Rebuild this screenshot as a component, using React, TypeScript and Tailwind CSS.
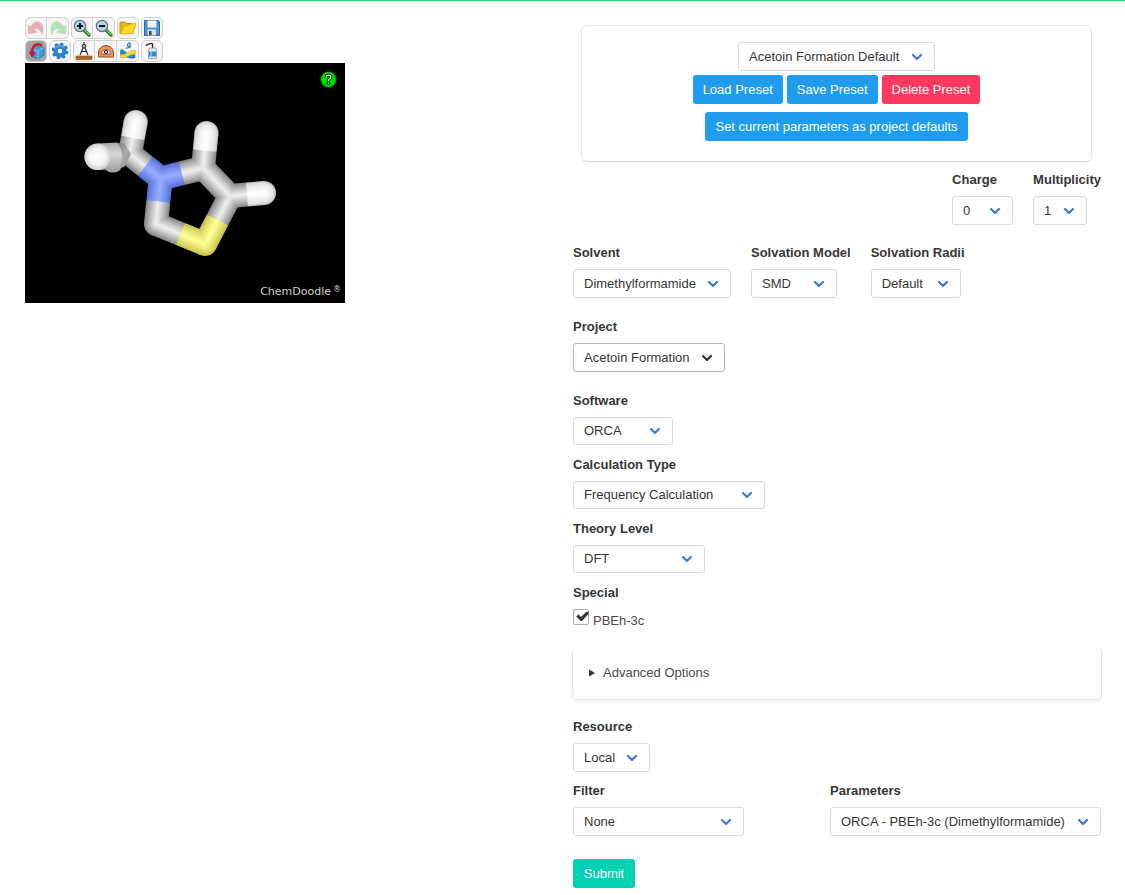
import React from "react";

type Rgb = [number, number, number];
type Atom = { x: number; y: number; el: "C" | "H" | "N" | "S" };

const shades: Record<Atom["el"], [Rgb, Rgb]> = {
  C: [[134, 134, 134], [236, 236, 236]],
  H: [[190, 190, 190], [255, 255, 255]],
  N: [[84, 112, 214], [148, 172, 255]],
  S: [[200, 196, 74], [255, 255, 150]],
};

const atoms: Atom[] = [
  { x: 110.7, y: 59, el: "H" },
  { x: 105, y: 91, el: "C" },
  { x: 135.7, y: 115.5, el: "N" },
  { x: 178, y: 105, el: "C" },
  { x: 181.5, y: 70, el: "H" },
  { x: 205, y: 133, el: "C" },
  { x: 239, y: 130, el: "H" },
  { x: 180, y: 181, el: "S" },
  { x: 131, y: 161, el: "C" },
];

const bonds: [number, number][] = [
  [0, 1],
  [1, 2],
  [2, 3],
  [3, 4],
  [3, 5],
  [5, 6],
  [5, 7],
  [7, 8],
  [8, 2],
];

const LAYERS = 12;
const STICK = 24;

function shade(el: Atom["el"], t: number) {
  const [a, b] = shades[el];
  const k = el === "H" ? Math.pow(t, 0.4) : Math.pow(t, 0.85);
  return `rgb(${a.map((v, i) => Math.round(v + (b[i] - v) * k)).join(",")})`;
}

function Molecule() {
  const layers = Array.from({ length: LAYERS }, (_, i) => i);
  return (
    <svg viewBox="0 0 320 240" className="block h-60 w-80" role="img" aria-label="Molecule">
      <defs>
        <linearGradient id="stub" x1="0" y1="0" x2="0" y2="1">
          <stop offset="0" stopColor="#a4a4a4" />
          <stop offset="0.4" stopColor="#d6d6d6" />
          <stop offset="1" stopColor="#a4a4a4" />
        </linearGradient>
        <linearGradient id="stubDark" x1="0" y1="0" x2="1" y2="1">
          <stop offset="0" stopColor="#7c7c7c" />
          <stop offset="0.5" stopColor="#aaaaaa" />
          <stop offset="1" stopColor="#8c8c8c" />
        </linearGradient>
        <radialGradient id="ball" cx="0.5" cy="0.5" r="0.5">
          <stop offset="0" stopColor="#ffffff" />
          <stop offset="0.6" stopColor="#f4f4f4" />
          <stop offset="1" stopColor="#cfcfcf" />
        </radialGradient>
      </defs>
      <ellipse cx="88" cy="105" rx="8" ry="4.500" fill="#a2a2a2" />
      {layers.map((l) => {
        const w = STICK * (1 - l / LAYERS);
        const t = l / (LAYERS - 1);
        return (
          <g key={l} strokeWidth={w}>
            {bonds.map(([p, q]) => {
              const a = atoms[p];
              const b = atoms[q];
              const mx = (a.x + b.x) / 2;
              const my = (a.y + b.y) / 2;
              return (
                <g key={`${p}-${q}`}>
                  <line x1={a.x} y1={a.y} x2={mx} y2={my} stroke={shade(a.el, t)} />
                  <line x1={mx} y1={my} x2={b.x} y2={b.y} stroke={shade(b.el, t)} />
                </g>
              );
            })}
            {atoms.map((a, i) => (
              <circle key={i} cx={a.x} cy={a.y} r={w / 2} fill={shade(a.el, t)} strokeWidth="0" />
            ))}
          </g>
        );
      })}
      <path d="M92 80 L99 80 L106 91 L99 104 L92 106 Z" fill="url(#stubDark)" />
      <path d="M72 80.500 L92 79.500 Q97 85 97 92 Q97 100 92 106 L72 107 Z" fill="url(#stub)" />
      <circle cx="72.500" cy="93.800" r="13.200" fill="url(#ball)" />
    </svg>
  );
}

function Tool({ label, active, faded, divided, children }: {
  label: string;
  active?: boolean;
  faded?: boolean;
  divided?: boolean;
  children: React.ReactNode;
}) {
  return (
    <button
      type="button"
      aria-label={label}
      className={`flex h-5 items-center justify-center ${active ? "bg-[#a3a3a3]" : ""} ${divided ? "w-[22px] border-l border-[#d3d3d3]" : "w-5"}`}
    >
      <svg viewBox="0 0 20 20" className={`h-5 w-5 shrink-0 ${faded ? "opacity-40" : ""}`} fill="none">
        {children}
      </svg>
    </button>
  );
}

function Group({ children }: { children: React.ReactNode }) {
  return <div className="flex overflow-hidden rounded-[5px] border border-[#d0d0d0] bg-[#f6f6f6]">{children}</div>;
}

function Magnifier({ plus }: { plus?: boolean }) {
  return (
    <>
      <path d="M11.500 11.500 L17 17" stroke="#227a22" strokeWidth="3.400" strokeLinecap="round" />
      <path d="M12.500 12 L17 16.400" stroke="#67d94b" strokeWidth="1.400" strokeLinecap="round" />
      <circle cx="8" cy="8" r="5.600" fill="#a9d6f3" stroke="#6d6d6d" strokeWidth="1.200" />
      <path d="M5 8 H11" stroke="#111" strokeWidth="2" />
      {plus && <path d="M8 5 V11" stroke="#111" strokeWidth="2" />}
    </>
  );
}

function Toolbar() {
  return (
    <div className="flex flex-col gap-px">
      <div className="flex gap-0.5">
        <Group>
          <Tool label="Undo" faded>
            <path d="M2 7 L2 16 L11.500 14.500 L8.500 11.500 C10.500 9.500 14 11 16.500 17 C18.500 9 16 3.500 11.500 3.500 C8.500 3.500 6.500 5.500 5 8.500 Z" fill="#d0484c" stroke="#b08080" strokeWidth="0.600" />
          </Tool>
          <Tool label="Redo" faded divided>
            <path d="M18 7 L18 16 L8.500 14.500 L11.500 11.500 C9.500 9.500 6 11 3.500 17 C1.500 9 4 3.500 8.500 3.500 C11.500 3.500 13.500 5.500 15 8.500 Z" fill="#4fc95a" stroke="#80b080" strokeWidth="0.600" />
          </Tool>
        </Group>
        <Group>
          <Tool label="Zoom in"><Magnifier plus /></Tool>
          <Tool label="Zoom out" divided><Magnifier /></Tool>
        </Group>
        <Group>
          <Tool label="Open">
            <path d="M2 15.500 V5 Q2 4 3 4 H7 L8.500 5.500 H13.500 V7.500 H17" fill="#e9b410" stroke="#c2920d" />
            <path d="M2.500 16 L6 8 Q11 8.500 12 6 L18 5.500 L15 15.500 Z" fill="#ffdc28" stroke="#d4a60b" strokeWidth="0.800" />
          </Tool>
        </Group>
        <Group>
          <Tool label="Save">
            <path d="M2.500 2.500 H16.500 L17.500 3.500 V17.500 H2.500 Z" fill="#4a8ed6" stroke="#2f65ab" />
            <rect x="5.500" y="2.500" width="9" height="7" fill="#f2f2f2" />
            <rect x="5.500" y="11.500" width="8.500" height="6" fill="#dce0e5" />
            <rect x="7" y="13" width="2.500" height="4" fill="#33404e" />
          </Tool>
        </Group>
      </div>
      <div className="flex gap-0.5">
        <Group>
          <Tool label="Rotate" active>
            <path d="M5 7.500 L11 4 L18 6.500 V14 L12 18 L5.500 15.500 Z" fill="#3e9bda" stroke="#1e69a4" strokeWidth="0.700" />
            <path d="M5 7.500 L12 10 L18 6.500 M12 10 V18" stroke="#87caf0" strokeWidth="0.900" />
            <path d="M16 4.500 C10.500 1 6.500 4.500 6 11.500" stroke="#d8141c" strokeWidth="2.400" />
            <path d="M2.500 10.500 L6 16.500 L9.800 11.500 Z" fill="#d8141c" />
          </Tool>
        </Group>
        <Group>
          <Tool label="Settings">
            <circle cx="10" cy="10" r="6.800" stroke="#2379bd" strokeWidth="3" strokeDasharray="3 2.340" />
            <circle cx="10" cy="10" r="4.500" fill="#f7f7f7" stroke="#2b84ca" strokeWidth="4.400" />
            <path d="M5 8 A5.500 5.500 0 0 1 14 6.500" stroke="#5fb2ea" strokeWidth="1.200" />
          </Tool>
        </Group>
        <Group>
          <Tool label="Distance">
            <rect x="2" y="15" width="16" height="3.500" fill="#b66524" stroke="#8e4a18" strokeWidth="0.600" />
            <path d="M10 1 V4 M9 7 L6 14 M11 7 L14 14 M7.500 10.500 H12.500" stroke="#222" strokeWidth="1.100" />
            <circle cx="10" cy="5.300" r="1.900" fill="#aaa" stroke="#222" />
          </Tool>
          <Tool label="Angle" divided>
            <path d="M2.500 16 V12 A7.500 7.500 0 0 1 17.500 12 V16 Z" fill="#e6935b" stroke="#9a4c18" />
            <path d="M5.500 13 A4.500 4.500 0 0 1 14.500 13 Z" fill="#f7eee8" stroke="#7d4320" strokeWidth="0.700" />
            <circle cx="10" cy="11" r="1.700" stroke="#333" />
            <path d="M10 8.500 V13" stroke="#67320f" strokeWidth="0.700" />
          </Tool>
          <Tool label="Torsion" divided>
            <path d="M8 7 C12 8 13.500 1.500 11 2 C9 2.500 9 8 13 5.500" stroke="#2876b7" strokeWidth="1.200" />
            <path d="M2.500 9 C7 7.500 8 15.500 17 13.500 V17 C9 18.500 6 13.500 2.500 14.500 Z" fill="#1c88d5" stroke="#1769a6" strokeWidth="0.500" />
            <path d="M2.500 13.500 C8 14.500 11 8.500 17.500 9.500 V13 C12 12.500 9 18 2.500 17 Z" fill="#fbd63d" stroke="#d6a719" strokeWidth="0.500" />
          </Tool>
        </Group>
        <Group>
          <Tool label="Clear">
            <path d="M4 5 C5.500 2.500 8 2.500 11 2.800 M10.500 2.500 V7" stroke="#222" strokeWidth="1.300" />
            <path d="M6.500 17.500 V9.500 Q6.500 7 8.500 7 H12.500 Q14.500 7 14.500 9.500 V17.500 Z" fill="#e4eef5" stroke="#7d8a94" strokeWidth="0.800" />
            <rect x="7" y="10.500" width="7" height="5" fill="#328dcc" />
            <path d="M9 9 V17" stroke="#b2d8f0" />
          </Tool>
        </Group>
      </div>
    </div>
  );
}

function Viewer() {
  return (
    <div className="pt-4">
      <Toolbar />
      <div className="relative mt-px w-80 bg-black">
        <Molecule />
        <button type="button" aria-label="Help" className="absolute top-2 right-2 h-[17px] w-[17px]">
          <svg viewBox="0 0 17 17" className="h-full w-full">
            <circle cx="8.500" cy="8.500" r="7.700" fill="#00dc00" stroke="#007d00" strokeWidth="0.800" />
            <path d="M6.200 6.200 Q6.200 4.200 8.500 4.200 Q11 4.200 10.700 6.300 Q10.500 7.300 8.600 8.800 V10" fill="none" stroke="#002c00" strokeWidth="3" />
            <circle cx="8.600" cy="12.300" r="1.700" fill="#002c00" />
            <path d="M6.200 6.200 Q6.200 4.200 8.500 4.200 Q11 4.200 10.700 6.300 Q10.500 7.300 8.600 8.800 V10" fill="none" stroke="#d8f0d8" strokeWidth="1.200" />
            <circle cx="8.600" cy="12.300" r="0.800" fill="#d8f0d8" />
          </svg>
        </button>
        <div className="absolute right-1 bottom-[3px] flex items-start gap-0.5 font-['DejaVu_Sans',sans-serif] text-[11px] leading-4 text-[#cfcfcf]">
          <span>ChemDoodle</span>
          <span className="text-[8px] leading-3">®</span>
        </div>
      </div>
    </div>
  );
}

function Select({ id, value, width, dark, short, label }: {
  id: string;
  value: string;
  width: string;
  dark?: boolean;
  short?: boolean;
  label?: string;
}) {
  return (
    <div className={`relative ${width} ${short ? "h-7" : "h-[29px]"}`}>
      <select
        id={id}
        aria-label={label}
        className={`h-full w-full appearance-none rounded-[3px] border bg-white pr-7 pl-2.5 text-[13px] leading-5 text-[#363636] ${dark ? "border-[#b5b5b5]" : "border-[#dbdbdb]"}`}
      >
        <option>{value}</option>
      </select>
      <svg
        viewBox="0 0 12 8"
        className={`pointer-events-none absolute top-1/2 right-3 h-2 w-3 -translate-y-1/2 ${dark ? "text-[#363636]" : "text-[#3f78de]"}`}
        fill="none"
        stroke="currentColor"
        strokeWidth="2.200"
        strokeLinecap="round"
        strokeLinejoin="round"
      >
        <path d="M2 2 L6 6 L10 2" />
      </svg>
    </div>
  );
}

function Field({ label, ...rest }: {
  label: string;
  id: string;
  value: string;
  width: string;
  dark?: boolean;
  short?: boolean;
}) {
  return (
    <div className="flex flex-col gap-1.5">
      <label htmlFor={rest.id} className="leading-5 font-bold whitespace-nowrap text-[#363636]">
        {label}
      </label>
      <Select {...rest} />
    </div>
  );
}

function Button({ color, children }: { color: string; children: React.ReactNode }) {
  return (
    <button type="button" className={`h-[29px] min-w-[62px] rounded-[3px] px-2.5 leading-5 whitespace-nowrap text-white ${color}`}>
      {children}
    </button>
  );
}

export default function App() {
  return (
    <main className="grid grid-cols-2 gap-5 border-t border-[#23d160] bg-white pr-6 pb-2 pl-[25px] font-['Liberation_Sans',Arial,sans-serif] text-[13px] text-[#4a4a4a]">
      <Viewer />

      <form className="pt-[25px]" onSubmit={(e) => e.preventDefault()}>
        <section className="mr-2.5 ml-[9px] flex flex-col items-center rounded-[5px] pt-4 pb-5 shadow-[0_2px_3px_rgba(10,10,10,0.05),0_0_0_1px_rgba(10,10,10,0.09)]">
          <Select id="preset" label="Preset" value="Acetoin Formation Default" width="w-[197px]" />
          <div className="mt-1 flex gap-1">
            <Button color="bg-[#209cee]">Load Preset</Button>
            <Button color="bg-[#209cee]">Save Preset</Button>
            <Button color="bg-[#ff3860]">Delete Preset</Button>
          </div>
          <div className="mt-2">
            <Button color="bg-[#209cee]">Set current parameters as project defaults</Button>
          </div>
        </section>

        <div className="mt-[9px] flex justify-end gap-5">
          <Field id="charge" label="Charge" value="0" width="w-[61px]" />
          <Field id="multiplicity" label="Multiplicity" value="1" width="w-[54px]" />
        </div>

        <div className="mt-[18px] flex flex-col gap-[19px]">
          <div className="flex gap-5">
            <Field id="solvent" label="Solvent" value="Dimethylformamide" width="w-[158px]" />
            <Field id="model" label="Solvation Model" value="SMD" width="w-[86px]" />
            <Field id="radii" label="Solvation Radii" value="Default" width="w-[90px]" />
          </div>
          <Field id="project" label="Project" value="Acetoin Formation" width="w-[152px]" dark />
          <div className="flex flex-col gap-2.5">
            <Field id="software" label="Software" value="ORCA" width="w-[100px]" short />
            <Field id="calculation" label="Calculation Type" value="Frequency Calculation" width="w-[192px]" short />
            <Field id="theory" label="Theory Level" value="DFT" width="w-[132px]" short />
            <fieldset>
              <legend className="mb-1.5 leading-5 font-bold text-[#363636]">Special</legend>
              <label className="flex h-[22px] items-end gap-1">
                <span className="relative h-4 w-4 self-start">
                  <input type="checkbox" defaultChecked className="peer block h-4 w-4 appearance-none rounded-[2px] border border-[#b5aca6] bg-[#fbfbfb]" />
                  <svg viewBox="0 0 16 16" className="pointer-events-none absolute inset-0 hidden h-4 w-4 peer-checked:block">
                    <path d="M3.200 7.200 L5.500 5.600 L8 8 L13.500 2.800 H15.500 V5 L9 12 H7.600 Z" fill="#2e3436" />
                  </svg>
                </span>
                <span className="leading-5">PBEh-3c</span>
              </label>
            </fieldset>
          </div>
        </div>

        <details className="-mx-px mt-4 rounded-[5px] border border-t-0 border-[#e6e6e6] px-4 py-4 shadow-[0_2px_3px_rgba(10,10,10,0.05)]">
          <summary className="flex list-none items-center gap-2 leading-5">
            <svg viewBox="0 0 6 8" className="h-2 w-1.5">
              <path d="M0 0.500 L6 4 L0 7.500 Z" fill="#363636" />
            </svg>
            Advanced Options
          </summary>
        </details>

        <div className="mt-[17px] flex flex-col gap-[9px]">
          <Field id="resource" label="Resource" value="Local" width="w-[77px]" />
          <div className="flex justify-between">
            <Field id="filter" label="Filter" value="None" width="w-[171px]" />
            <Field id="parameters" label="Parameters" value="ORCA - PBEh-3c (Dimethylformamide)" width="w-[271px]" />
          </div>
        </div>
        <div className="mt-[23px] flex">
          <Button color="bg-[#00d1b2]">Submit</Button>
        </div>
      </form>
    </main>
  );
}
